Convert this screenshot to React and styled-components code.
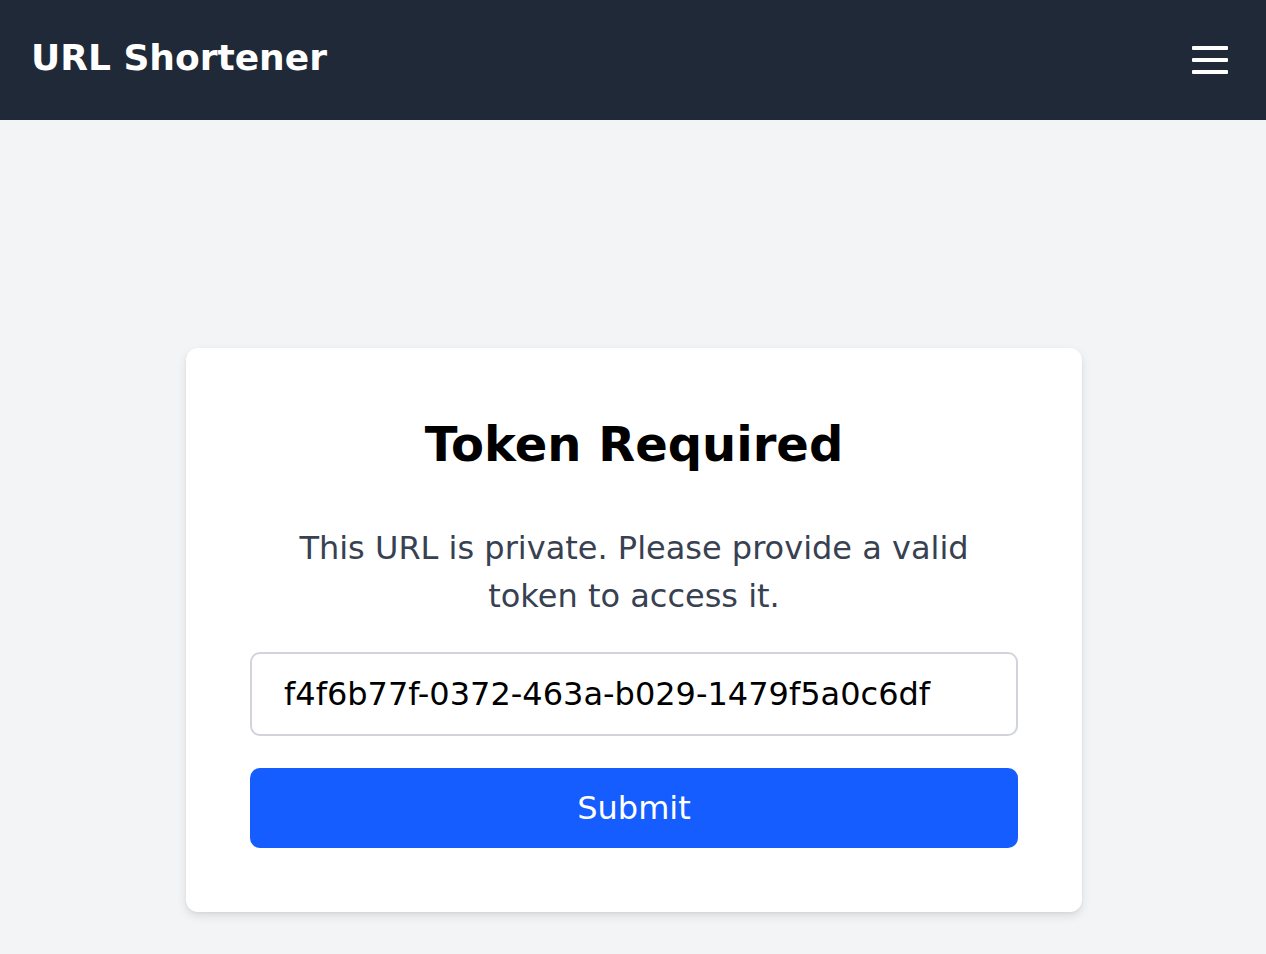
import React, { useState } from "react";
import styled, { createGlobalStyle } from "styled-components";

const Global = createGlobalStyle`
  html, body { margin: 0; padding: 0; }
  body {
    background: #f3f4f6;
    font-family: "DejaVu Sans", "Liberation Sans", sans-serif;
  }
  * { box-sizing: border-box; }
`;

const Page = styled.div`
  min-height: 954px;
  background: #f3f4f6;
`;

const Header = styled.header`
  height: 120px;
  background: #1f2937;
  display: flex;
  align-items: center;
  justify-content: space-between;
  padding: 0 38px 0 31px;
`;

const Brand = styled.div`
  color: #ffffff;
  font-weight: 700;
  font-size: 36px;
  margin-bottom: 6px;
`;

const MenuButton = styled.button`
  background: none;
  border: none;
  padding: 0;
  width: 36px;
  height: 28px;
  display: flex;
  flex-direction: column;
  justify-content: space-between;
  cursor: pointer;
`;

const MenuLine = styled.span`
  display: block;
  height: 4px;
  width: 36px;
  background: #ffffff;
  border-radius: 1px;
`;

const Main = styled.main`
  display: flex;
  justify-content: center;
  padding: 228px 0 0 2px;
`;

const Card = styled.div`
  width: 896px;
  background: #ffffff;
  border-radius: 12px;
  box-shadow: 0 4px 10px rgba(0, 0, 0, 0.1), 0 1px 3px rgba(0, 0, 0, 0.05);
  padding: 64px;
  display: flex;
  flex-direction: column;
  align-items: stretch;
`;

const Title = styled.h1`
  margin: 0 0 48px;
  text-align: center;
  font-size: 48px;
  font-weight: 700;
  color: #000000;
  line-height: 64px;
`;

const Text = styled.p`
  margin: 0 auto 32px;
  max-width: 720px;
  text-align: center;
  font-size: 32px;
  line-height: 48px;
  color: #374151;
`;

const Input = styled.input`
  width: 100%;
  height: 84px;
  border: 2px solid #d1d5db;
  border-radius: 10px;
  padding: 0 32px;
  font-family: inherit;
  font-size: 32px;
  color: #000000;
  outline: none;
  margin-bottom: 32px;
`;

const Submit = styled.button`
  width: 100%;
  height: 80px;
  border: none;
  border-radius: 10px;
  background: #165dff;
  color: #ffffff;
  font-family: inherit;
  font-size: 32px;
  cursor: pointer;
`;

export default function App() {
  const [token, setToken] = useState("f4f6b77f-0372-463a-b029-1479f5a0c6df");
  return (
    <Page>
      <Global />
      <Header>
        <Brand>URL Shortener</Brand>
        <MenuButton aria-label="Menu">
          <MenuLine />
          <MenuLine />
          <MenuLine />
        </MenuButton>
      </Header>
      <Main>
        <Card>
          <Title>Token Required</Title>
          <Text>This URL is private. Please provide a valid token to access it.</Text>
          <Input value={token} onChange={(e) => setToken(e.target.value)} />
          <Submit>Submit</Submit>
        </Card>
      </Main>
    </Page>
  );
}
